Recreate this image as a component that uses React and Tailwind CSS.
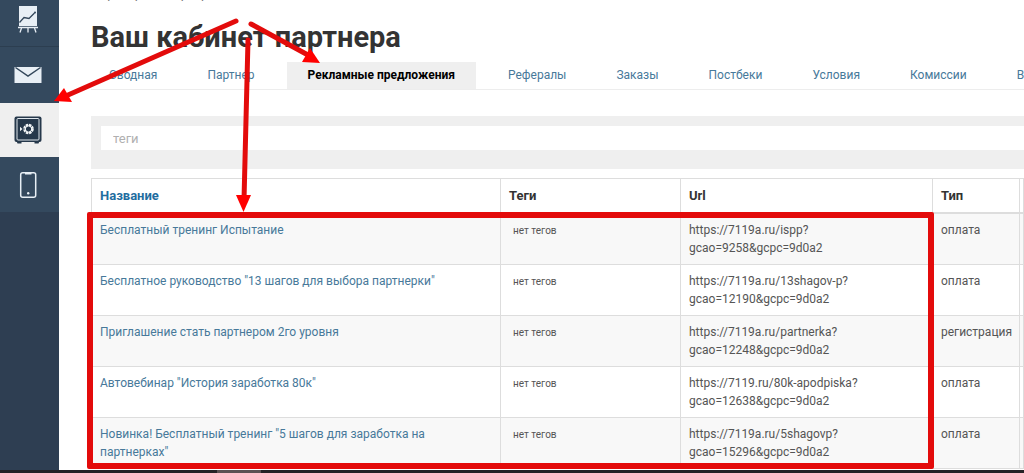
import React from "react";

const tabs = [
  { label: "Сводная" },
  { label: "Партнер" },
  { label: "Рекламные предложения", active: true },
  { label: "Рефералы" },
  { label: "Заказы" },
  { label: "Постбеки" },
  { label: "Условия" },
  { label: "Комиссии" },
  { label: "В" },
];

const rows = [
  ["Бесплатный тренинг Испытание", "https://7119a.ru/ispp?", "gcao=9258&gcpc=9d0a2", "оплата"],
  ['Бесплатное руководство "13 шагов для выбора партнерки"', "https://7119a.ru/13shagov-p?", "gcao=12190&gcpc=9d0a2", "оплата"],
  ["Приглашение стать партнером 2го уровня", "https://7119a.ru/partnerka?", "gcao=12248&gcpc=9d0a2", "регистрация"],
  ['Автовебинар "История заработка 80к"', "https://7119.ru/80k-apodpiska?", "gcao=12638&gcpc=9d0a2", "оплата"],
  ['Новинка! Бесплатный тренинг "5 шагов для заработка на партнерках"', "https://7119a.ru/5shagovp?", "gcao=15296&gcpc=9d0a2", "оплата"],
];

function ChartIcon() {
  return (
    <svg className="h-7 w-7" viewBox="0 0 28 28" fill="none">
      <path d="M5 0h18v20H5z" fill="#e8eff5" />
      <path d="M4 21.5h20" stroke="#e8eff5" strokeWidth="1.5" />
      <path d="M7.5 22l-1.5 4.5M14 22v4.5M20.5 22l1.5 4.5" stroke="#e8eff5" strokeWidth="1.3" />
      <path d="M5.5 16.5l4.5-5 5 1 5.5-5.5" stroke="#33475b" strokeWidth="1.3" />
      <circle cx="21" cy="6.5" r="1" fill="#33475b" />
    </svg>
  );
}

function MailIcon() {
  return (
    <svg className="h-7 w-7" viewBox="0 0 28 28" fill="none">
      <path d="M.5 6h27v16H.5z" fill="#e8eff5" />
      <path d="M1.5 6.5L14 15l12.5-8.5" stroke="#33475b" strokeWidth="1.5" />
    </svg>
  );
}

function SafeIcon() {
  return (
    <svg className="h-7 w-7" viewBox="0 0 28 28" fill="none">
      <path d="M2.5 25h5v2.5h-4zM20.5 25h5l-1 2.5h-4z" fill="#26384b" />
      <rect x=".5" y=".5" width="27" height="25.5" rx="2" fill="#26384b" />
      <rect x="3" y="2.5" width="22" height="21.5" rx="1" stroke="#dfe6ec" strokeWidth="1" />
      <circle cx="14.5" cy="13" r="4" stroke="#f1f4f6" strokeWidth="2.6" strokeDasharray="2.4 .74" />
      <circle cx="14.5" cy="13" r="3.2" stroke="#f1f4f6" strokeWidth="1" />
      <path d="M6 10.8l2.5 2.2L6 15.2z" fill="#f1f4f6" />
    </svg>
  );
}

function PhoneIcon() {
  return (
    <svg className="h-7 w-7" viewBox="0 0 28 28" fill="none">
      <rect x="6.7" y="1.7" width="15" height="24.6" rx="2" stroke="#e8eff5" strokeWidth="1.5" />
      <path d="M11 2h6.5v1.5H11z" fill="#e8eff5" />
      <circle cx="14.2" cy="22.3" r="1.2" fill="#e8eff5" />
    </svg>
  );
}

const menu = [
  { label: "Статистика", icon: ChartIcon, style: "h-[47px] border-b border-[#2c3e50] bg-[#34495e] pb-1.5" },
  { label: "Сообщения", icon: MailIcon, style: "h-[56px] bg-[#34495e]" },
  { label: "Партнерская программа", icon: SafeIcon, style: "h-[54px] bg-[#efefef]" },
  { label: "Приложение", icon: PhoneIcon, style: "h-[55px] bg-[#34495e]" },
];

function Sidebar() {
  return (
    <nav className="flex w-[59px] shrink-0 flex-col bg-[#2e3e52]">
      {menu.map(({ label, icon: Icon, style }) => (
        <a key={label} href="#" aria-label={label} className={"flex items-center justify-center pr-1 " + style}>
          <Icon />
        </a>
      ))}
    </nav>
  );
}

function Tabs() {
  return (
    <nav className="flex gap-3.5 border-b border-[#ededed] text-[12px] leading-[18px] whitespace-nowrap">
      {tabs.map(({ label, active }) => (
        <a
          key={label}
          href="#"
          className={
            active
              ? "bg-[#efefef] px-[21px] pt-1 pb-[5px] font-bold text-black"
              : "px-[18px] pt-1 pb-[5px] text-[#47799a]"
          }
        >
          {label}
        </a>
      ))}
    </nav>
  );
}

function OffersTable() {
  const head = "border border-[#dddddd] border-b-2 px-2 pt-2 pb-[7px] text-left text-[13px] font-bold";
  const cell = "border border-[#dddddd] px-2 py-[7px] align-top";
  return (
    <div className="relative mt-[9px]">
      <table className="w-full table-fixed border-collapse text-[12px] leading-[18px] text-[#555555]">
        <colgroup>
          <col className="w-[409px]" />
          <col className="w-[180px]" />
          <col className="w-[252px]" />
          <col className="w-[87px]" />
          <col />
        </colgroup>
        <thead>
          <tr className="text-[#333333]">
            <th className={head}><a href="#" className="text-[#1f6d9f]">Название</a></th>
            <th className={head}>Теги</th>
            <th className={head}>Url</th>
            <th className={head}>Тип</th>
            <th className={head} />
          </tr>
        </thead>
        <tbody>
          {rows.map(([name, url, query, type]) => (
            <tr key={name} className="odd:bg-[#f8f8f8]">
              <td className={cell}><a href="#" className="text-[#47799a]">{name}</a></td>
              <td className={cell}><span className="px-1 text-[10px]">нет тегов</span></td>
              <td className={cell}>{url}<br />{query}</td>
              <td className={cell}>{type}</td>
              <td className={cell} />
            </tr>
          ))}
        </tbody>
      </table>
      <div className="pointer-events-none absolute top-[34px] -left-1 h-[257px] w-[847px] rounded-xs border-[6px] border-[#e30b0b]" />
    </div>
  );
}

function Arrows() {
  return (
    <svg className="pointer-events-none absolute top-0 left-0 h-[220px] w-[340px]" viewBox="0 0 340 220">
      <g stroke="#e30b0b" strokeWidth="5" strokeLinecap="round">
        <path d="M236 21L68 95" />
        <path d="M251 24l57 31" />
        <path d="M248 40l-4 160" />
      </g>
      <g fill="#ff0000">
        <path d="M54 101l10-13 8 14z" />
        <path d="M320 63l-18-1 8-14z" />
        <path d="M243.5 212l-7.5-17h15z" />
      </g>
    </svg>
  );
}

export default function App() {
  return (
    <div className="relative flex h-screen flex-col overflow-hidden bg-white font-['Roboto','Liberation_Sans',sans-serif]">
      <div className="flex min-h-0 flex-1">
        <Sidebar />
        <main className="min-w-0 flex-1 overflow-hidden pl-8">
          <div className="-mt-[15px] text-[13px] leading-[18px] text-[#777777]">Партнерская программа</div>
          <h1 className="mt-[17px] text-[29px] leading-[34px] font-bold text-[#333333]">Ваш кабинет партнера</h1>
          <div className="mt-2">
            <Tabs />
          </div>
          <div className="mt-[26px] bg-[#efefef] pt-[10px] pb-[19px] pl-[10px]">
            <input
              type="text"
              aria-label="теги"
              placeholder="теги"
              className="block h-6 w-full bg-white px-3 text-[13px] outline-none placeholder:text-[#b0b0b0]"
            />
          </div>
          <OffersTable />
        </main>
      </div>
      <div className="flex h-[3px] shrink-0 bg-[#252226] pl-[217px]">
        <div className="w-11 bg-[#5c5052]" />
      </div>
      <Arrows />
    </div>
  );
}
